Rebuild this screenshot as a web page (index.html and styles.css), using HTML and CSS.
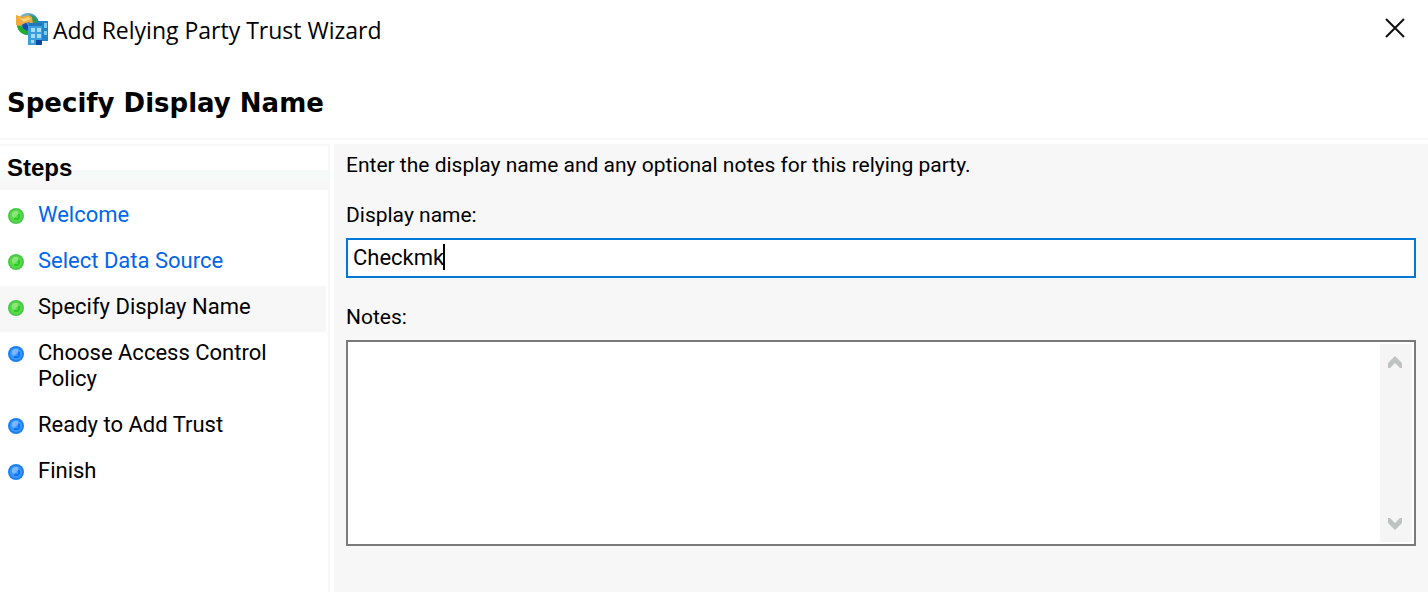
FILE: index.html
```html
<!DOCTYPE html>
<html lang="en">
<head>
<meta charset="utf-8">
<meta name="viewport" content="width=device-width, initial-scale=1">
<title>Add Relying Party Trust Wizard</title>
<link rel="stylesheet" href="styles.css">
</head>
<body>
<svg class="defs" width="0" height="0" aria-hidden="true">
  <defs>
    <linearGradient id="globe" x1="0" y1="0" x2="1" y2="1">
      <stop offset="0" stop-color="#9cc9cf"/><stop offset=".5" stop-color="#3f93b8"/><stop offset="1" stop-color="#1450a8"/>
    </linearGradient>
    <symbol id="dot-green" viewBox="0 0 16 16">
      <circle cx="8" cy="8" r="8" fill="#4cc84c"/>
      <circle cx="8" cy="8" r="6" fill="#58dc46"/>
      <path d="M4 8V5l2-2h4v3L6 10z" fill="#8ae67a"/>
      <path d="M10 6h2v4l-2 2H6v-2h4z" fill="#2cc82c"/>
    </symbol>
    <symbol id="dot-blue" viewBox="0 0 16 16">
      <circle cx="8" cy="8" r="8" fill="#1e80f5"/>
      <circle cx="8" cy="8" r="6" fill="#3c98ff"/>
      <path d="M4 8V5l2-2h4v3L6 10z" fill="#7cb8ff"/>
      <path d="M10 6h2v4l-2 2H6v-2h4z" fill="#0a74ff"/>
    </symbol>
  </defs>
</svg>
<div class="wizard">
  <header class="titlebar">
    <svg class="app-icon" viewBox="0 0 32 32" aria-hidden="true">
      <circle cx="12" cy="11" r="11" fill="url(#globe)"/>
      <path d="M14 2l5 2 3 5-4 1-4-3z" fill="#2f9a55"/>
      <path d="M1 11c3 0 4 3 7 4s5 2 5 7C6 22 1 18 1 11z" fill="#1fae2c"/>
      <path d="M6 11l4-1 3 4-2 4-4-3z" fill="#1747b5"/>
      <path d="M0 2l6 2 6-2 4 2 1 8-4-3-4 1-5 3-4-1z" fill="#f0a93c"/>
      <path d="M2 4l5 2 5-2 3 2-7 3z" fill="#ffd276"/>
      <path d="M22 8h10v24H22z" fill="#1f86cc"/>
      <path d="M12 13l2-3h12v22H12z" fill="#3a9fdc"/>
      <path d="M13 10h13v3H13z" fill="#2376b8"/>
      <path d="M15 15h4v4h-4zM21 15h4v4h-4zM15 21h4v4h-4zM21 21h4v4h-4zM15 27h3v3h-3z" fill="#a6ddf6"/>
      <path d="M28 10h3v5h-3zM28 18h3v4h-3z" fill="#7ecbf0"/>
      <path d="M20 27h6v5h-6z" fill="#0c4aa4"/>
      <path d="M26 28h6v4h-6z" fill="#fff"/>
    </svg>
    <span class="window-title">Add Relying Party Trust Wizard</span>
    <button class="close" type="button" aria-label="Close">
      <svg viewBox="0 0 20 20" aria-hidden="true"><path d="M1 1l18 18M19 1L1 19" fill="none" stroke="#111" stroke-width="2"/></svg>
    </button>
  </header>
  <h1 class="heading">Specify Display Name</h1>
  <div class="body">
    <nav class="sidebar" aria-labelledby="steps-title">
      <h2 class="steps-title" id="steps-title">Steps</h2>
      <ol class="steps">
        <li class="step"><svg class="dot" aria-hidden="true"><use href="#dot-green"/></svg><a href="#welcome">Welcome</a></li>
        <li class="step"><svg class="dot" aria-hidden="true"><use href="#dot-green"/></svg><a href="#source">Select Data Source</a></li>
        <li class="step current" aria-current="step"><svg class="dot" aria-hidden="true"><use href="#dot-green"/></svg><span>Specify Display Name</span></li>
        <li class="step"><svg class="dot" aria-hidden="true"><use href="#dot-blue"/></svg><span>Choose Access Control Policy</span></li>
        <li class="step"><svg class="dot" aria-hidden="true"><use href="#dot-blue"/></svg><span>Ready to Add Trust</span></li>
        <li class="step"><svg class="dot" aria-hidden="true"><use href="#dot-blue"/></svg><span>Finish</span></li>
      </ol>
    </nav>
    <main class="content">
      <p class="intro">Enter the display name and any optional notes for this relying party.</p>
      <label class="label" for="display-name">Display name:</label>
      <div class="name-field">
        <input class="name-input" id="display-name" type="text" value="Checkmk">
        <span class="caret" aria-hidden="true"></span>
      </div>
      <label class="label notes-label" for="notes">Notes:</label>
      <div class="notes-field">
        <textarea class="notes-input" id="notes"></textarea>
        <div class="scrollbar">
          <button class="scroll-button" type="button" aria-label="Scroll up"><svg viewBox="0 0 14 12" aria-hidden="true"><path d="M0 12V7l7-7 7 7v5h-2L7 7l-5 5z" fill="#bfc3c1"/></svg></button>
          <button class="scroll-button" type="button" aria-label="Scroll down"><svg viewBox="0 0 14 12" aria-hidden="true"><path d="M0 0v5l7 7 7-7V0h-2L7 5 2 0z" fill="#bfc3c1"/></svg></button>
        </div>
      </div>
    </main>
  </div>
</div>
</body>
</html>
```
FILE: styles.css
```css
* {
  box-sizing: border-box;
}

body {
  margin: 0;
  background: #fff;
  color: #000;
  font-family: Roboto, "Liberation Sans", sans-serif;
  font-size: 22px;
  line-height: 26px;
}

button {
  padding: 0;
  border: 0;
  background: none;
}

.defs {
  position: absolute;
}

.wizard {
  display: flex;
  flex-direction: column;
  min-height: 100vh;
}

.titlebar {
  display: flex;
  align-items: center;
  gap: 5px;
  height: 60px;
  padding: 0 16px;
}

.app-icon {
  width: 32px;
  height: 32px;
  margin-bottom: 2px;
}

.window-title {
  font-family: "Open Sans", "Noto Sans", sans-serif;
  font-size: 23px;
}

.close {
  display: flex;
  align-items: center;
  justify-content: center;
  width: 34px;
  height: 34px;
  margin-left: auto;
  padding-bottom: 4px;
}

.close svg {
  width: 20px;
  height: 20px;
}

.heading {
  margin: 0;
  padding: 27px 7px 19px;
  border-bottom: 2px solid #f7f7f7;
  font-family: "DejaVu Sans", sans-serif;
  font-size: 26px;
  font-weight: 700;
  line-height: 32px;
}

.body {
  display: flex;
  flex: 1;
  gap: 4px;
  padding-top: 4px;
}

.sidebar {
  flex: 0 0 330px;
  border-top: 2px solid #f7f7f7;
  border-right: 2px solid #f7f7f7;
}

.steps-title {
  margin: 0 0 4px;
  padding: 9px 7px;
  background: linear-gradient(#fff 24px, #f5f9f7 24px 34px, #f7f7f7 34px);
  font-family: "Liberation Sans", sans-serif;
  font-size: 24px;
  line-height: 26px;
}

.steps {
  margin: 0;
  padding: 0 2px 0 0;
  list-style: none;
}

.step {
  display: flex;
  gap: 14px;
  padding: 8px 40px 12px 8px;
}

.step a {
  color: #0066eb;
  text-decoration: none;
}

.current {
  background: #f7f7f7;
}

.dot {
  flex: none;
  width: 16px;
  height: 16px;
  margin-top: 6px;
}

.content {
  display: flex;
  flex: 1;
  flex-direction: column;
  padding: 8px 12px 46px;
  background: #f7f7f7;
  font-size: 21px;
}

.intro {
  margin: 0 0 24px;
}

.label {
  margin-bottom: 10px;
}

.notes-label {
  margin-top: 26px;
}

.name-field {
  position: relative;
}

.name-input {
  display: block;
  width: 100%;
  height: 40px;
  padding: 0 5px 2px;
  border: 2px solid #0078d7;
  border-radius: 0;
  outline: 0;
  background: #fff;
  color: #000;
  font: inherit;
  font-size: 22px;
}

.caret {
  position: absolute;
  top: 6px;
  left: 97px;
  width: 2px;
  height: 26px;
  background: #000;
}

.notes-field {
  display: flex;
  flex: 1;
  padding: 2px;
  border: 2px solid #7a7a7a;
  background: #fff;
}

.notes-input {
  flex: 1;
  min-width: 0;
  padding: 0 5px;
  border: 0;
  outline: 0;
  resize: none;
  background: #fff;
  font: inherit;
}

.scrollbar {
  display: flex;
  flex: 0 0 32px;
  flex-direction: column;
  justify-content: space-between;
  background: #f5f5f5;
}

.scroll-button {
  display: flex;
  align-items: center;
  justify-content: center;
  width: 30px;
  height: 36px;
}

.scroll-button svg {
  width: 14px;
  height: 12px;
}
```
